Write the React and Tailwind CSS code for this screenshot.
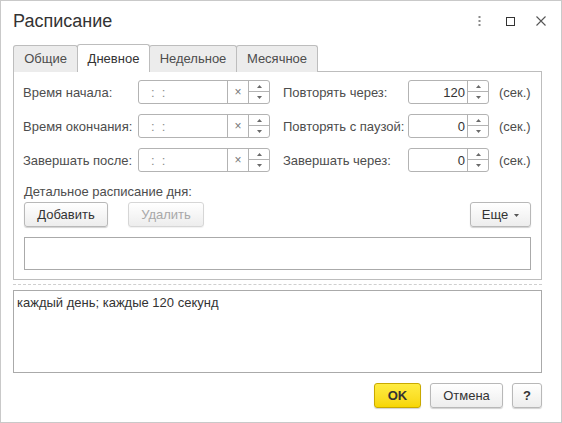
import React from "react";

const Arrow = ({ down }) => (
  <svg width="5" height="3" viewBox="0 0 5 3">
    <polygon points={down ? "0,0 5,0 2.5,3" : "0,3 5,3 2.5,0"} fill="#6a6a6a" />
  </svg>
);

function Spinner() {
  return (
    <div className="w-[21px] h-full border-l border-[#b3b3b3] flex flex-col">
      <div className="h-[11px] flex items-center justify-center border-b border-[#b3b3b3]">
        <Arrow />
      </div>
      <div className="flex-1 flex items-center justify-center">
        <Arrow down />
      </div>
    </div>
  );
}

function TimeInput() {
  return (
    <div className="w-[132px] h-[24px] border border-[#b3b3b3] rounded-[3px] flex bg-white shrink-0">
      <div className="flex-1 flex items-center pl-[12px] text-[#8c8c8c] whitespace-pre">{":  :"}</div>
      <div className="w-[21px] border-l border-[#b3b3b3] flex items-center justify-center text-[#777] text-[12px]">
        ×
      </div>
      <Spinner />
    </div>
  );
}

function NumberInput({ value }) {
  return (
    <div className="w-[81px] h-[24px] border border-[#b3b3b3] rounded-[3px] flex bg-white shrink-0">
      <div className="flex-1 flex items-center justify-end pr-[2px] text-[#333]">{value}</div>
      <Spinner />
    </div>
  );
}

function Row({ left, right, value }) {
  return (
    <div className="flex items-center h-[24px]">
      <div className="w-[115px] shrink-0">{left}</div>
      <TimeInput />
      <div className="ml-[13px] w-[125px] shrink-0">{right}</div>
      <NumberInput value={value} />
      <div className="ml-[10px]">(сек.)</div>
    </div>
  );
}

function Btn({ children, className = "", disabled }) {
  return (
    <div
      className={
        "h-[25px] flex items-center justify-center rounded-[3px] border bg-linear-to-b from-white to-[#ededed] " +
        (disabled
          ? "border-[#d6d6d6] text-[#a8a8a8] shadow-[0_1px_1px_rgba(0,0,0,0.06)] "
          : "border-[#b8b8b8] text-[#333] shadow-[0_1px_1px_rgba(0,0,0,0.18)] ") +
        className
      }
    >
      {children}
    </div>
  );
}

export default function App() {
  return (
    <div className="w-[562px] h-[423px] bg-white border border-[#c9c9c9] font-['Liberation_Sans',Arial,sans-serif] text-[13px] leading-[15px] text-[#4d4d4d] overflow-hidden">
      {/* Title */}
      <div className="h-[40px] flex items-center pl-[12px] pr-[15px]">
        <div className="text-[18px] leading-[21px] text-[#333]">Расписание</div>
        <div className="ml-auto flex items-center">
          <svg width="3" height="10" viewBox="0 0 3 10">
            <rect x="0.5" y="0" width="2" height="2" fill="#8a8a8a" />
            <rect x="0.5" y="4" width="2" height="2" fill="#8a8a8a" />
            <rect x="0.5" y="8" width="2" height="2" fill="#8a8a8a" />
          </svg>
          <svg width="9" height="9" viewBox="0 0 9 9" className="ml-[25px]">
            <rect x="0.5" y="0.5" width="8" height="8" fill="none" stroke="#333" strokeWidth="1" />
          </svg>
          <svg width="10" height="10" viewBox="0 0 10 10" className="ml-[21px]">
            <path d="M0.5 0.5 L9.5 9.5 M9.5 0.5 L0.5 9.5" stroke="#555" strokeWidth="1.1" />
          </svg>
        </div>
      </div>

      <div className="ml-[12px] w-[529px] mt-[3px]">
        {/* Tabs */}
        <div className="h-[28px] flex items-end relative z-10">
          <div className="w-[65px] h-[27px] border border-b-0 border-[#bdbdbd] rounded-t-[3px] bg-[#ececec] flex items-center justify-center pb-px">
            Общие
          </div>
          <div className="-ml-px w-[73px] h-[28px] border border-b-0 border-[#bdbdbd] rounded-t-[3px] bg-white flex items-center justify-center text-[#333] relative z-10">
            Дневное
          </div>
          <div className="-ml-px w-[88px] h-[27px] border border-b-0 border-[#bdbdbd] rounded-t-[3px] bg-[#ececec] flex items-center justify-center pb-px">
            Недельное
          </div>
          <div className="-ml-px w-[82px] h-[27px] border border-b-0 border-[#bdbdbd] rounded-t-[3px] bg-[#ececec] flex items-center justify-center pb-px">
            Месячное
          </div>
        </div>

        {/* Panel */}
        <div className="-mt-px h-[209px] border border-[#bdbdbd] bg-white pl-[9px] pr-[10px] pt-[8px]">
          <div className="flex flex-col gap-[10px]">
            <Row left="Время начала:" right="Повторять через:" value="120" />
            <Row left="Время окончания:" right="Повторять с паузой:" value="0" />
            <Row left="Завершать после:" right="Завершать через:" value="0" />
          </div>
          <div className="ml-[1px] mt-[12px] h-[15px]">Детальное расписание дня:</div>
          <div className="ml-[1px] mt-[3px] flex">
            <Btn className="w-[84px]">Добавить</Btn>
            <Btn className="w-[76px] ml-[20px]" disabled>
              Удалить
            </Btn>
            <Btn className="w-[61px] ml-auto">
              <span>Еще</span>
              <svg width="5" height="3" viewBox="0 0 5 3" className="ml-[6px] mt-[2px]">
                <polygon points="0,0 5,0 2.5,3" fill="#555" />
              </svg>
            </Btn>
          </div>
          <div className="ml-[1px] mt-[10px] h-[33px] border border-[#aaaaaa]"></div>
        </div>

        <div className="mt-[4px] border-t border-dashed border-[#cfcfcf]"></div>

        <div className="mt-[5px] h-[83px] border border-[#aaaaaa] pl-[3px] pt-[4px] text-[#333]">
          каждый день; каждые 120 секунд
        </div>

        <div className="mt-[10px] flex justify-end gap-[9px]">
          <div className="w-[47px] h-[25px] flex items-center justify-center rounded-[3px] border border-[#c9a900] bg-linear-to-b from-[#ffec40] to-[#f7d600] shadow-[0_1px_1px_rgba(0,0,0,0.18)] text-[#333] font-bold text-[13px]">
            OK
          </div>
          <Btn className="w-[73px]">Отмена</Btn>
          <Btn className="w-[30px] font-bold">?</Btn>
        </div>
      </div>
    </div>
  );
}
